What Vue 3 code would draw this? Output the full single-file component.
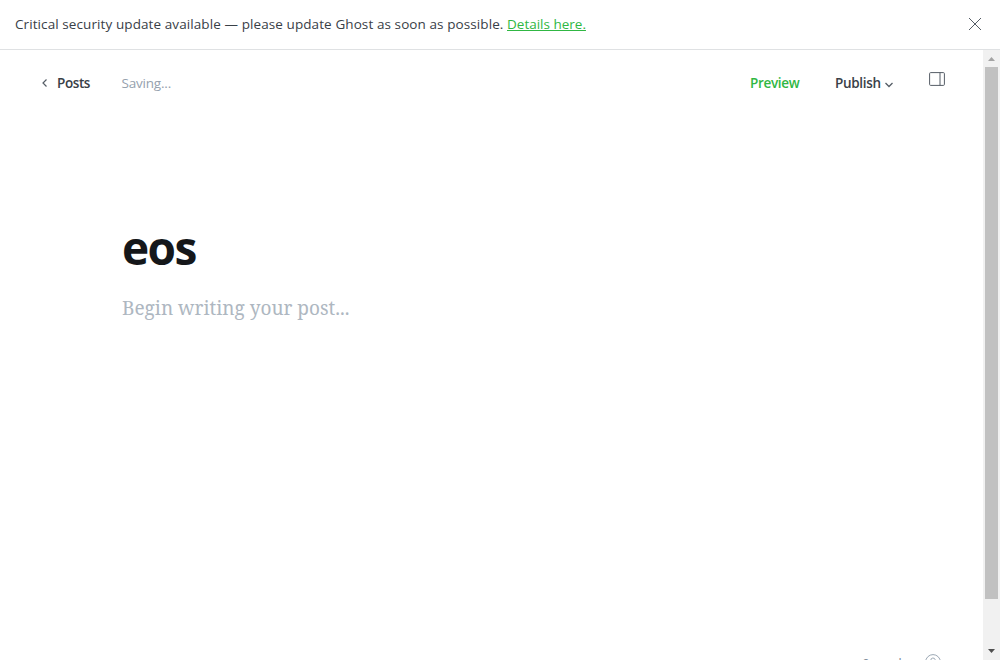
<script setup>
import { ref } from 'vue'

const title = ref('eos')
const wordCount = ref(0)
</script>

<template>
  <div class="app">
    <aside class="alert">
      <p class="alert-text"><span class="message">Critical security update available — please update Ghost as soon as possible.</span><a class="details" href="#">Details here.</a></p>
      <button class="close" aria-label="Close">
        <svg width="12" height="12" viewBox="0 0 12 12"><path d="M0 0l12 12M12 0L0 12" /></svg>
      </button>
    </aside>
    <div class="viewport">
      <main class="editor">
        <header class="toolbar">
          <a class="back" href="#">
            <svg width="5" height="8" viewBox="0 0 5 8"><path d="M4.5 .5L1 4l3.5 3.5" /></svg>
            <span class="posts">Posts</span>
          </a>
          <span class="status">Saving...</span>
          <nav class="actions">
            <a class="preview" href="#">Preview</a>
            <a class="publish" href="#"><span>Publish</span>
              <svg width="8" height="6" viewBox="0 0 8 6"><path d="M.5 1L4 4.5 7.5 1" /></svg>
            </a>
            <button class="settings" aria-label="Settings">
              <svg width="16" height="14" viewBox="0 0 16 14"><rect x=".6" y=".6" width="14.8" height="12.8" rx="1" /><path d="M11 .5v13" /></svg>
            </button>
          </nav>
        </header>
        <section class="post">
          <h1>{{ title }}</h1>
          <p class="placeholder">Begin writing your post...</p>
        </section>
        <footer class="footer">
          <span class="words">{{ wordCount }} words</span>
          <svg class="help" width="16" height="16" viewBox="0 0 16 16"><circle cx="8" cy="8" r="7.4" /><path d="M5.8 6.2a2.2 2.2 0 1 1 2.9 2.1c-.5.2-.7.5-.7 1.1M8 11v1" /></svg>
        </footer>
      </main>
      <div class="scrollbar">
        <svg class="arrow" width="17" height="17" viewBox="0 0 17 17"><path d="M5 11l3.5-4 3.5 4z" fill="#a3a3a3" /></svg>
        <div class="thumb"></div>
        <svg class="arrow" width="17" height="17" viewBox="0 0 17 17"><path d="M5 6h7l-3.5 4z" fill="#505050" /></svg>
      </div>
    </div>
  </div>
</template>

<style>
html, body { margin: 0; overflow: hidden; background: #fff; }
</style>

<style scoped>
.app { display: flex; flex-direction: column; height: 660px; overflow: hidden; font-family: "Segoe UI", "Open Sans", "Noto Sans", sans-serif; font-size: 14px; color: #394047; }
a { color: inherit; text-decoration: none; }
button { padding: 0; border: 0; background: none; display: flex; }
svg { display: block; fill: none; stroke: #555d66; }
.alert { box-sizing: border-box; height: 50px; flex: none; display: flex; align-items: center; justify-content: space-between; padding: 0 19px 1px 15px; border-bottom: 1px solid #dfe1e3; }
.alert-text { margin: 0; line-height: 20px; font-size: 13.5px; display: flex; gap: 4px; white-space: nowrap; }
.message { width: 488px; letter-spacing: .12px; }
.details { color: #30b743; text-decoration: underline; letter-spacing: 0; }
.message { letter-spacing: .09px; }
.viewport { display: flex; height: 610px; }
.editor { width: 983px; display: flex; flex-direction: column; overflow: hidden; }
.toolbar { height: 66px; flex: none; display: flex; align-items: center; padding: 0 38px 0 42px; line-height: 20px; font-size: 13.5px; }
.back { display: flex; align-items: center; width: 79.5px; gap: 10px; font-weight: 600; letter-spacing: -.4px; }
.back svg { stroke-width: 1.2; }
.status { color: #95a1ad; letter-spacing: -.2px; }
.actions { margin-left: auto; display: flex; align-items: center; font-weight: 600; letter-spacing: -.33px; }
.preview { color: #30b743; width: 85px; }
.publish { display: flex; align-items: center; width: 94px; gap: 4px; }
.publish svg { margin-top: 4px; stroke-width: 1.3; }
.settings { margin-top: -8px; }
.post { padding: 106px 122px 0; flex: 1; }
h1 { margin: 0; font-size: 46px; line-height: 50px; letter-spacing: -1.6px; font-weight: 700; color: #15171a; }
.placeholder { margin: 24px 0 0; font-family: Georgia, "Noto Serif", "DejaVu Serif", "Liberation Serif", serif; font-size: 19px; line-height: 24px; color: #aeb7c1; }
.footer { height: 6px; flex: none; display: flex; justify-content: flex-end; align-items: flex-start; gap: 20px; padding-right: 42px; color: #7c8b9a; font-size: 13px; line-height: 18px; letter-spacing: -.5px; }
.footer .words { margin-right: -2px; }
.help { flex: none; stroke: #9ca8b4; }
.scrollbar { width: 17px; background: #f1f1f1; display: flex; flex-direction: column; }
.arrow { stroke: none; flex: none; }
.thumb { width: 13px; height: 532px; margin: 0 auto auto 2px; background: #c1c1c1; }
</style>
